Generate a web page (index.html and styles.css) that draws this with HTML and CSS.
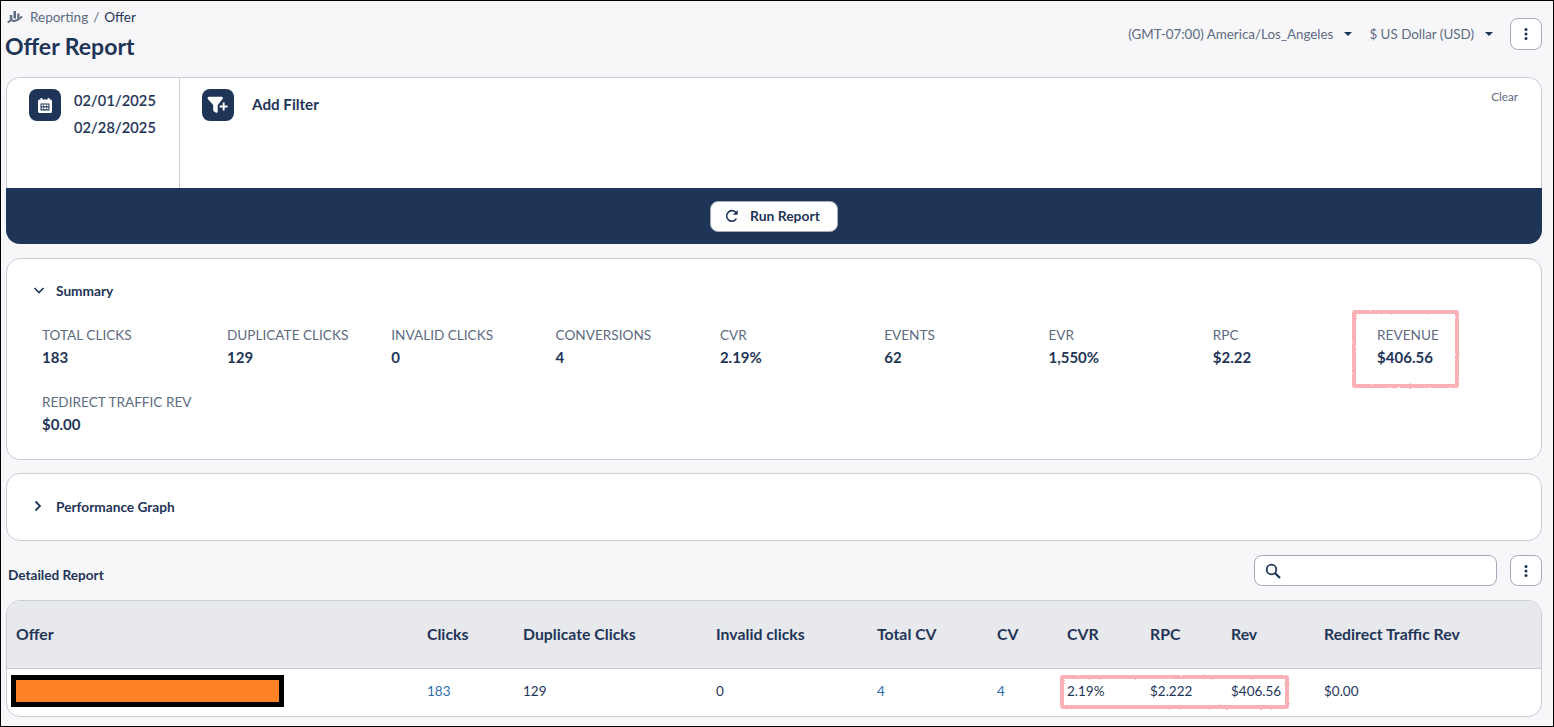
FILE: index.html
```html
<!DOCTYPE html>
<html lang="en">
<head>
  <meta charset="UTF-8" />
  <meta name="viewport" content="width=device-width, initial-scale=1.0" />
  <title>Offer Report</title>
  <link rel="stylesheet" href="styles.css">
</head>
<body>

  <!-- roughens the highlighter marks -->
  <svg class="defs" width="0" height="0">
    <filter id="rough" x="-5%" y="-5%" width="110%" height="110%">
      <feTurbulence type="fractalNoise" baseFrequency="0.35" numOctaves="2" seed="4"/>
      <feDisplacementMap in="SourceGraphic" scale="2"/>
    </filter>
  </svg>

  <div class="page">

    <!-- Header -->
    <header class="top-bar">
      <div class="title-block">
        <div class="breadcrumb">
          <svg class="crumb-icon" viewBox="0 0 16 14" width="16" height="14">
            <path d="M6.500 1h2.500v7.500H6.500zM10.200 3.500h2.300v4l-2.300 1.500zM2.800 5h2.500v4.500H2.800z" fill="#5d6b80"/>
            <path d="M.8 12.500l3.200-2.500 3 1.200 4-1.500 4.200-3.200" fill="none" stroke="#5d6b80" stroke-width="1.800"/>
          </svg>
          <span class="crumb-link">Reporting</span>
          <span class="crumb-sep">/</span>
          <span class="crumb-current">Offer</span>
        </div>
        <h1>Offer Report</h1>
      </div>
      <div class="top-actions">
        <span class="select-label tz">(GMT-07:00) America/Los_Angeles</span>
        <span class="caret"></span>
        <span class="select-label currency">$ US Dollar (USD)</span>
        <span class="caret"></span>
        <button class="icon-btn top-menu">
          <svg viewBox="0 0 4 14" width="4" height="14"><circle cx="2" cy="2.500" r="1.500"/><circle cx="2" cy="7" r="1.500"/><circle cx="2" cy="11.500" r="1.500"/></svg>
        </button>
      </div>
    </header>

    <!-- Filters -->
    <section class="filter-panel">
      <div class="filter-body">
        <div class="date-col">
          <div class="square-icon">
            <svg viewBox="0 0 14 15" width="14" height="15">
              <path fill="#fff" fill-rule="evenodd" d="M2.500 0h1.800v1.500h5.400V0h1.800v1.500h1A1.500 1.500 0 0 1 14 3v10.500a1.500 1.500 0 0 1-1.500 1.500h-11A1.500 1.500 0 0 1 0 13.500V3a1.500 1.500 0 0 1 1.500-1.500h1zM2.500 5.500v7h9v-7zM3.500 6.500h2v1.800h-2zM6 6.500h2v1.800H6zM8.500 6.500h2v1.800h-2zM3.500 9.500h2v1.800h-2zM6 9.500h2v1.800H6zM8.500 9.500h2v1.800h-2z"/>
            </svg>
          </div>
          <div class="dates">
            <div>02/01/2025</div>
            <div>02/28/2025</div>
          </div>
        </div>
        <div class="filter-col">
          <div class="square-icon">
            <svg viewBox="0 0 22 18" width="22" height="18">
              <path fill="#fff" d="M.5 2.200C.5 1.300 1.200.7 2 .7h12.500c1.200 0 1.900 1.400 1.100 2.300l-4.900 6v6.500c0 1.100-1.200 1.700-2.100 1.100l-1.900-1.400a1.300 1.300 0 0 1-.5-1V9l-5.400-6a1.300 1.300 0 0 1-.3-.8z"/>
              <path fill="#fff" d="M15.700 6.500h1.900v3h3v1.900h-3v3h-1.900v-3h-3V9.500h3z"/>
            </svg>
          </div>
          <span class="add-filter">Add Filter</span>
          <span class="clear-link">Clear</span>
        </div>
      </div>
      <div class="run-bar">
        <button class="run-btn">
          <svg viewBox="0 0 16 16" width="14" height="14">
            <path fill="none" stroke="#1f3557" stroke-width="1.800" d="M13 11a6 6 0 1 1 .2-5.800"/>
            <path fill="#1f3557" d="M14.500 1v5.500H9z"/>
          </svg>
          Run Report
        </button>
      </div>
    </section>

    <!-- Summary -->
    <section class="card summary-card">
      <div class="card-title">
        <svg class="chevron" viewBox="0 0 12 12" width="12" height="12"><path d="M1.500 4l4.500 4.500L10.500 4" fill="none" stroke="#1f3557" stroke-width="1.600"/></svg>
        Summary
      </div>
      <div class="stats">
        <div class="stat"><div class="stat-label">TOTAL CLICKS</div><div class="stat-value">183</div></div>
        <div class="stat"><div class="stat-label">DUPLICATE CLICKS</div><div class="stat-value">129</div></div>
        <div class="stat"><div class="stat-label">INVALID CLICKS</div><div class="stat-value">0</div></div>
        <div class="stat"><div class="stat-label">CONVERSIONS</div><div class="stat-value">4</div></div>
        <div class="stat"><div class="stat-label">CVR</div><div class="stat-value">2.19%</div></div>
        <div class="stat"><div class="stat-label">EVENTS</div><div class="stat-value">62</div></div>
        <div class="stat"><div class="stat-label">EVR</div><div class="stat-value">1,550%</div></div>
        <div class="stat"><div class="stat-label">RPC</div><div class="stat-value">$2.22</div></div>
        <div class="stat revenue"><div class="stat-label">REVENUE</div><div class="stat-value">$406.56</div><div class="mark mark-revenue"></div></div>
        <div class="stat"><div class="stat-label">REDIRECT TRAFFIC REV</div><div class="stat-value">$0.00</div></div>
      </div>
    </section>

    <section class="card graph-card">
      <div class="card-title">
        <svg class="chevron" viewBox="0 0 12 12" width="12" height="12"><path d="M3.500 1.500L8 6l-4.500 4.500" fill="none" stroke="#1f3557" stroke-width="1.800"/></svg>
        Performance Graph
      </div>
    </section>

    <!-- Detailed report -->
    <div class="detail-head">
      <span class="detail-title">Detailed Report</span>
      <div class="detail-actions">
        <div class="search-box">
          <svg viewBox="0 0 16 16" width="16" height="16"><circle cx="6.500" cy="6.500" r="4.800" fill="none" stroke="#1f3557" stroke-width="1.800"/><path d="M10 10l5 5" stroke="#1f3557" stroke-width="2.200"/></svg>
        </div>
        <button class="icon-btn">
          <svg viewBox="0 0 4 14" width="4" height="14"><circle cx="2" cy="2.500" r="1.500"/><circle cx="2" cy="7" r="1.500"/><circle cx="2" cy="11.500" r="1.500"/></svg>
        </button>
      </div>
    </div>

    <div class="table-wrap">
      <table class="report-table">
        <colgroup>
          <col class="c-offer"><col class="c-clicks"><col class="c-dup"><col class="c-invalid"><col class="c-total"><col class="c-cv"><col class="c-cvr"><col class="c-rpc"><col class="c-rev"><col>
        </colgroup>
        <thead>
          <tr>
            <th>Offer</th>
            <th>Clicks</th>
            <th>Duplicate Clicks</th>
            <th>Invalid clicks</th>
            <th>Total CV</th>
            <th>CV</th>
            <th>CVR</th>
            <th>RPC</th>
            <th>Rev</th>
            <th>Redirect Traffic Rev</th>
          </tr>
        </thead>
        <tbody>
          <tr>
            <td class="offer-cell"><div class="redacted"></div></td>
            <td><a class="num-link">183</a></td>
            <td>129</td>
            <td>0</td>
            <td><a class="num-link">4</a></td>
            <td><a class="num-link">4</a></td>
            <td class="cvr-cell">2.19%<div class="mark mark-row"></div></td>
            <td>$2.222</td>
            <td>$406.56</td>
            <td>$0.00</td>
          </tr>
        </tbody>
      </table>
    </div>

  </div>

</body>
</html>
```

FILE: styles.css
```css
* {
  box-sizing: border-box;
}

html, body {
  margin: 0;
  height: 100%;
  overflow: hidden;
}

body {
  font-family: "Lato", sans-serif;
  font-size: 14px;
  color: #1f3557;
}

.defs {
  position: absolute;
}

.page {
  height: 727px;
  border: 1px solid #000;
  background: #f7f7fa;
  padding: 0 11px 0 5px;
}

/* header */
.top-bar {
  height: 76px;
  display: flex;
  justify-content: space-between;
}

.title-block {
  padding-top: 8px;
}

.breadcrumb {
  display: flex;
  align-items: center;
  height: 16px;
  padding-left: 1px;
  font-size: 13.500px;
  color: #5d6b80;
}

.crumb-icon {
  margin-right: 7px;
}

.crumb-sep {
  margin: 0 5px;
}

.crumb-current {
  color: #1f3557;
}

h1 {
  margin: 5px 0 0 -1px;
  font-size: 23px;
  line-height: 32px;
  font-weight: 700;
  color: #1f3557;
}

.top-actions {
  display: flex;
  align-items: center;
  height: 66px;
  font-size: 13.400px;
  color: #5d6b80;
}

.caret {
  width: 0;
  height: 0;
  margin: 0 0 0 11px;
  border-left: 4px solid transparent;
  border-right: 4px solid transparent;
  border-top: 4px solid #1f3557;
}

.currency {
  margin-left: 17px;
}

.icon-btn {
  width: 32px;
  height: 32px;
  padding: 0;
  background: #fff;
  border: 1px solid #a3abb8;
  border-radius: 8px;
  display: flex;
  align-items: center;
  justify-content: center;
  fill: #1f3557;
}

.top-menu {
  margin-left: 17px;
}

/* filter panel */
.filter-panel {
  height: 167px;
  border-radius: 14px;
  overflow: hidden;
}

.filter-body {
  height: 111px;
  display: flex;
  background: #fff;
  border: 1px solid #c8cdd6;
  border-bottom: none;
  border-radius: 14px 14px 0 0;
}

.date-col {
  width: 173px;
  display: flex;
  gap: 13px;
  padding: 11px 0 0 22px;
  border-right: 1px solid #c8cdd6;
}

.filter-col {
  flex: 1;
  display: flex;
  padding: 11px 23px 0 22px;
}

.square-icon {
  width: 32px;
  height: 32px;
  flex-shrink: 0;
  background: #1f3557;
  border-radius: 8px;
  display: flex;
  align-items: center;
  justify-content: center;
}

.dates {
  margin-top: -2px;
  font-size: 14.500px;
  font-weight: 500;
  line-height: 27px;
  letter-spacing: 0.150px;
  -webkit-text-stroke: 0.200px #1f3557;
}

.add-filter {
  margin-left: 18px;
  font-size: 15.200px;
  font-weight: 700;
  line-height: 31px;
}

.clear-link {
  margin: -1px 0 0 auto;
  font-size: 11.700px;
  color: #5d6b80;
  line-height: 16px;
}

.run-bar {
  height: 56px;
  background: #1f3557;
  display: flex;
  align-items: center;
  justify-content: center;
}

.run-btn {
  width: 128px;
  height: 31px;
  padding: 0 0 1px 14px;
  display: flex;
  align-items: center;
  gap: 11px;
  background: #fff;
  border: 1px solid #a3abb8;
  border-radius: 8px;
  font-family: "Lato", sans-serif;
  font-size: 13.900px;
  font-weight: 700;
  color: #1f3557;
}

/* cards */
.card {
  background: #fff;
  border: 1px solid #c8cdd6;
  border-radius: 14px;
}

.summary-card {
  height: 202px;
  margin-top: 14px;
  padding: 23px 0 0 26px;
}

.graph-card {
  height: 68px;
  margin-top: 13px;
  padding: 24px 0 0 26px;
}

.graph-card .chevron {
  margin-left: -1px;
  margin-right: 1px;
}

.card-title {
  display: flex;
  align-items: center;
  gap: 11px;
  height: 16px;
  font-size: 13.700px;
  font-weight: 700;
  color: #1f3557;
}

.chevron {
  flex-shrink: 0;
}

.stats {
  display: grid;
  grid-template-columns: 185px repeat(8, 164.300px);
  grid-auto-rows: 67px;
  margin: 27px 0 0 9px;
}

.stat {
  position: relative;
}

.stat-label {
  font-size: 13.600px;
  line-height: 20px;
  color: #5d6b80;
}

.stat-value {
  margin-top: 1px;
  font-size: 15px;
  font-weight: 700;
  line-height: 22px;
}

.mark {
  position: absolute;
  border: 4px solid #f9b0b6;
  border-radius: 3px;
  pointer-events: none;
  filter: url(#rough);
}

.mark-revenue {
  left: -25px;
  top: -15px;
  width: 107px;
  height: 78px;
}

/* detailed report */
.detail-head {
  height: 59px;
  display: flex;
  justify-content: space-between;
  padding-top: 14px;
}

.detail-title {
  margin: 9px 0 0 2px;
  font-size: 13.600px;
  font-weight: 700;
  line-height: 22px;
}

.detail-actions {
  display: flex;
  gap: 13px;
}

.search-box {
  width: 243px;
  height: 31px;
  background: #fff;
  border: 1px solid #a3abb8;
  border-radius: 8px;
  padding: 7px 0 0 10px;
}

.detail-actions .icon-btn {
  height: 31px;
}

.table-wrap {
  height: 117px;
  border: 1px solid #c8cdd6;
  border-radius: 14px;
  background: #fff;
  overflow: hidden;
}

.report-table {
  width: 100%;
  border-collapse: collapse;
  table-layout: fixed;
}

.c-offer { width: 410px; }
.c-clicks { width: 96px; }
.c-dup { width: 193px; }
.c-invalid { width: 161px; }
.c-total { width: 120px; }
.c-cv { width: 70px; }
.c-cvr { width: 83px; }
.c-rpc { width: 81px; }
.c-rev { width: 93px; }

.report-table th {
  height: 67px;
  padding: 0 10px 2px;
  background: #e8e9ed;
  border-bottom: 1px solid #c8cdd6;
  text-align: left;
  font-size: 15.800px;
  font-weight: 700;
  color: #1f3557;
}

.report-table th:first-child {
  padding-left: 9px;
}

.report-table td {
  height: 46px;
  padding: 0 10px;
  font-size: 13.500px;
  color: #1f3557;
}

.report-table .offer-cell {
  padding: 0 0 0 4px;
}

.num-link {
  color: #2f6da8;
}

.redacted {
  width: 273px;
  height: 32px;
  background: #ff8125;
  border: 5px solid #000;
}

.cvr-cell {
  position: relative;
}

.mark-row {
  left: 3px;
  top: 6px;
  width: 229px;
  height: 34px;
}
```
